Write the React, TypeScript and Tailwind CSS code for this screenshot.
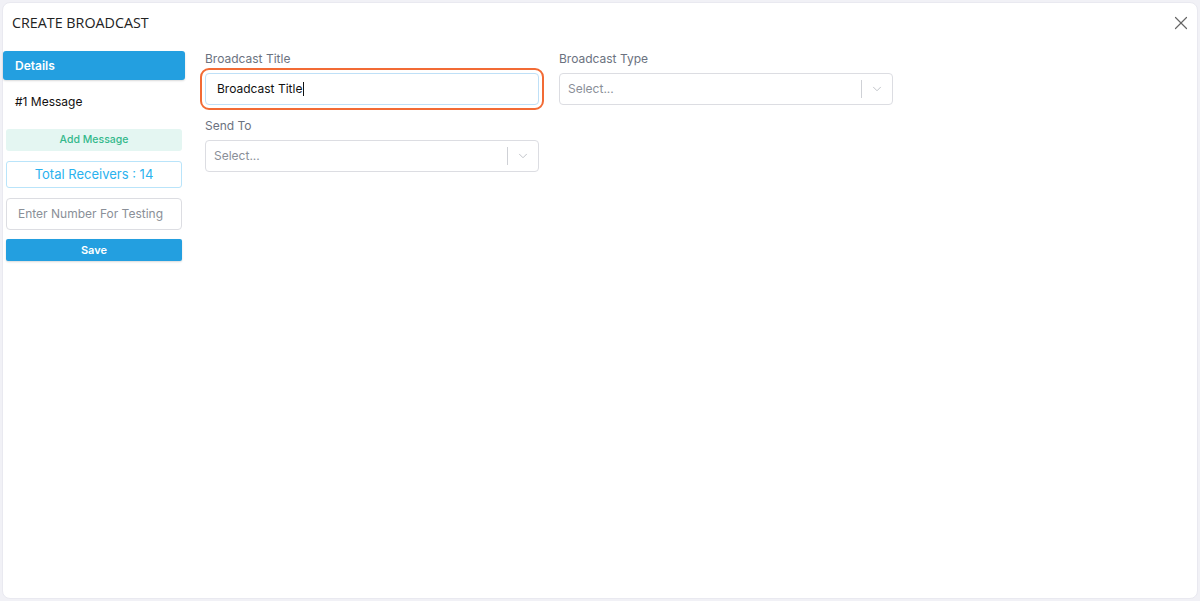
import { X, ChevronDown } from 'lucide-react'

const body = { fontFamily: 'Inter, "Open Sans", sans-serif' }

function Select({ width }: { width: string }) {
  return (
    <div
      className={`${width} h-[32px] flex items-center border border-[#dcdde2] rounded-[4px] bg-white`}
    >
      <span className="flex-1 pl-[8px] text-[12px] text-[#8a8f98]">Select...</span>
      <span className="w-px h-[18px] bg-[#cfd1d6]" />
      <span className="w-[30px] flex items-center justify-center">
        <ChevronDown className="w-[14px] h-[14px] text-[#b8bbc1]" strokeWidth={1.5} />
      </span>
    </div>
  )
}

export default function App() {
  return (
    <div className="w-[1200px] h-[601px] bg-[#f1f1f6] p-[2px]" style={body}>
      <div className="h-full bg-white rounded-[8px] border border-[#e9e9f0] flex flex-col">
        {/* Header */}
        <header className="flex items-center justify-between h-[40px] pl-[9px] pr-[5px]">
          <h1
            className="text-[14.3px] text-[#222]"
            style={{ fontFamily: '"Open Sans", sans-serif' }}
          >
            CREATE BROADCAST
          </h1>
          <X className="w-[22px] h-[22px] text-[#666]" strokeWidth={1.3} />
        </header>

        <div className="flex flex-1 pt-[4px]">
          {/* Sidebar */}
          <aside className="w-[182px] pt-[4px] flex flex-col">
            <div className="h-[29px] bg-[#239fe0] rounded-[3px] flex items-center pl-[12px] text-[12px] font-semibold text-white shadow-[0_1px_2px_rgba(0,0,0,0.15)]">
              Details
            </div>
            <div className="h-[44px] flex items-center pl-[12px] text-[12px] text-[#111]">
              #1 Message
            </div>
            <div className="ml-[3px] w-[176px] flex flex-col gap-[10px] mt-[5px]">
              <div className="h-[22px] bg-[#e4f6f2] rounded-[3px] flex items-center justify-center text-[10.5px] font-medium text-[#34b98c]">
                Add Message
              </div>
              <div className="h-[27px] border border-[#b9e4fa] rounded-[3px] flex items-center justify-center text-[13px] text-[#2ab2ee]">
                Total Receivers : 14
              </div>
              <div className="h-[32px] border border-[#dcdde2] rounded-[4px] flex items-center pl-[11px] text-[12px] text-[#8a8f98]">
                Enter Number For Testing
              </div>
              <div className="h-[22px] -mt-px bg-[#239fe0] rounded-[2px] flex items-center justify-center text-[11px] font-semibold text-white shadow-[0_1px_2px_rgba(0,0,0,0.15)]">
                Save
              </div>
            </div>
          </aside>

          {/* Main */}
          <main className="flex-1 pl-[20px] pt-[4px]">
            <div className="flex gap-[20px]">
              <div className="flex flex-col">
                <label className="text-[12px] leading-[16px] text-[#6b7280] mb-[6px]">Broadcast Title</label>
                <div className="w-[334px] h-[32px] flex items-center border border-[#bfe0f7] rounded-[4px] outline-2 outline-[#f26b35] outline-offset-[3px] pl-[11px] text-[12px] text-[#111]">
                  Broadcast Title
                  <span className="w-px h-[14px] bg-[#111] ml-px" />
                </div>
              </div>
              <div className="flex flex-col">
                <label className="text-[12px] leading-[16px] text-[#6b7280] mb-[6px]">Broadcast Type</label>
                <Select width="w-[334px]" />
              </div>
            </div>
            <div className="flex flex-col mt-[13px]">
              <label className="text-[12px] leading-[16px] text-[#6b7280] mb-[6px]">Send To</label>
              <Select width="w-[334px]" />
            </div>
          </main>
        </div>
      </div>
    </div>
  )
}
